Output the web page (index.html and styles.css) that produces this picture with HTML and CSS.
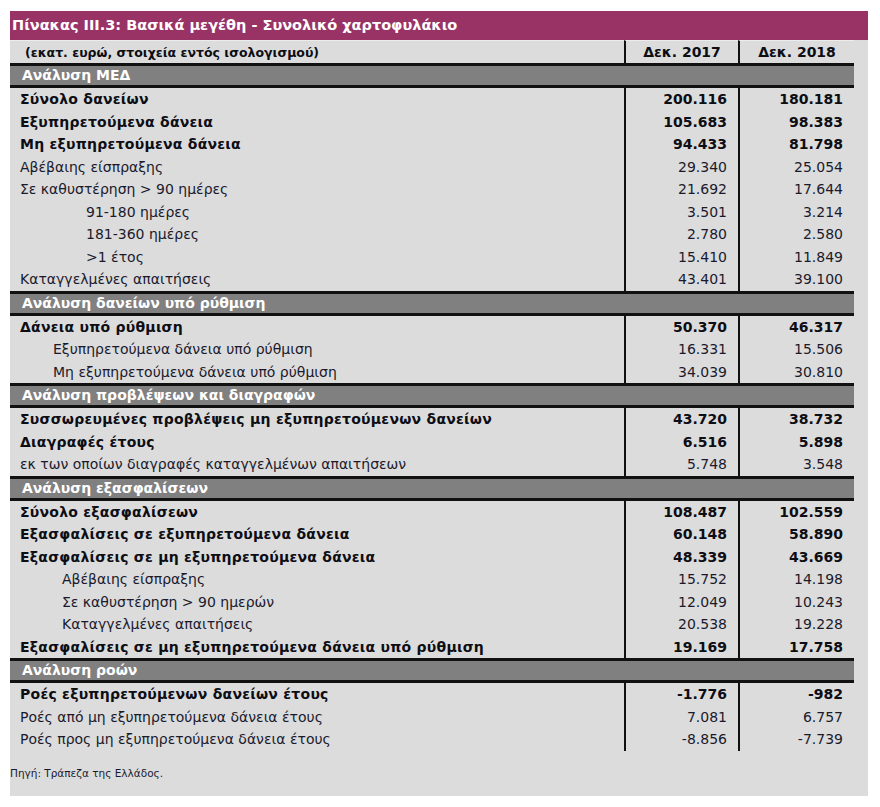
FILE: index.html
```html
<!DOCTYPE html>
<html lang="el">
<head>
<meta charset="utf-8">
<title>Πίνακας ΙΙΙ.3</title>
<link rel="stylesheet" href="styles.css">
</head>
<body>
<div class="panel">
  <div class="title">Πίνακας ΙΙΙ.3: Βασικά μεγέθη - Συνολικό χαρτοφυλάκιο</div>
  <div class="table">
    <div class="row head">
      <div class="lbl">(εκατ. ευρώ, στοιχεία εντός ισολογισμού)</div>
      <div class="num">Δεκ. 2017</div>
      <div class="num">Δεκ. 2018</div>
    </div>

    <div class="section">Ανάλυση ΜΕΔ</div>
    <div class="row b"><div class="lbl">Σύνολο δανείων</div><div class="num">200.116</div><div class="num">180.181</div></div>
    <div class="row b"><div class="lbl">Εξυπηρετούμενα δάνεια</div><div class="num">105.683</div><div class="num">98.383</div></div>
    <div class="row b"><div class="lbl">Μη εξυπηρετούμενα δάνεια</div><div class="num">94.433</div><div class="num">81.798</div></div>
    <div class="row"><div class="lbl">Αβέβαιης είσπραξης</div><div class="num">29.340</div><div class="num">25.054</div></div>
    <div class="row"><div class="lbl">Σε καθυστέρηση &gt; 90 ημέρες</div><div class="num">21.692</div><div class="num">17.644</div></div>
    <div class="row"><div class="lbl i2">91-180 ημέρες</div><div class="num">3.501</div><div class="num">3.214</div></div>
    <div class="row"><div class="lbl i2">181-360 ημέρες</div><div class="num">2.780</div><div class="num">2.580</div></div>
    <div class="row"><div class="lbl i2">&gt;1 έτος</div><div class="num">15.410</div><div class="num">11.849</div></div>
    <div class="row"><div class="lbl">Καταγγελμένες απαιτήσεις</div><div class="num">43.401</div><div class="num">39.100</div></div>

    <div class="section">Ανάλυση δανείων υπό ρύθμιση</div>
    <div class="row b"><div class="lbl">Δάνεια υπό ρύθμιση</div><div class="num">50.370</div><div class="num">46.317</div></div>
    <div class="row"><div class="lbl i1">Εξυπηρετούμενα δάνεια υπό ρύθμιση</div><div class="num">16.331</div><div class="num">15.506</div></div>
    <div class="row"><div class="lbl i1">Μη εξυπηρετούμενα δάνεια υπό ρύθμιση</div><div class="num">34.039</div><div class="num">30.810</div></div>

    <div class="section">Ανάλυση προβλέψεων και διαγραφών</div>
    <div class="row b"><div class="lbl">Συσσωρευμένες προβλέψεις μη εξυπηρετούμενων δανείων</div><div class="num">43.720</div><div class="num">38.732</div></div>
    <div class="row b"><div class="lbl">Διαγραφές έτους</div><div class="num">6.516</div><div class="num">5.898</div></div>
    <div class="row"><div class="lbl">εκ των οποίων διαγραφές καταγγελμένων απαιτήσεων</div><div class="num">5.748</div><div class="num">3.548</div></div>

    <div class="section">Ανάλυση εξασφαλίσεων</div>
    <div class="row b"><div class="lbl">Σύνολο εξασφαλίσεων</div><div class="num">108.487</div><div class="num">102.559</div></div>
    <div class="row b"><div class="lbl">Εξασφαλίσεις σε εξυπηρετούμενα δάνεια</div><div class="num">60.148</div><div class="num">58.890</div></div>
    <div class="row b"><div class="lbl">Εξασφαλίσεις σε μη εξυπηρετούμενα δάνεια</div><div class="num">48.339</div><div class="num">43.669</div></div>
    <div class="row"><div class="lbl i3">Αβέβαιης είσπραξης</div><div class="num">15.752</div><div class="num">14.198</div></div>
    <div class="row"><div class="lbl i3">Σε καθυστέρηση &gt; 90 ημερών</div><div class="num">12.049</div><div class="num">10.243</div></div>
    <div class="row"><div class="lbl i3">Καταγγελμένες απαιτήσεις</div><div class="num">20.538</div><div class="num">19.228</div></div>
    <div class="row b"><div class="lbl">Εξασφαλίσεις σε μη εξυπηρετούμενα δάνεια υπό ρύθμιση</div><div class="num">19.169</div><div class="num">17.758</div></div>

    <div class="section">Ανάλυση ροών</div>
    <div class="row b"><div class="lbl">Ροές εξυπηρετούμενων δανείων έτους</div><div class="num">-1.776</div><div class="num">-982</div></div>
    <div class="row"><div class="lbl">Ροές από μη εξυπηρετούμενα δάνεια έτους</div><div class="num">7.081</div><div class="num">6.757</div></div>
    <div class="row"><div class="lbl">Ροές προς μη εξυπηρετούμενα δάνεια έτους</div><div class="num">-8.856</div><div class="num">-7.739</div></div>
  </div>
  <div class="source">Πηγή: Τράπεζα της Ελλάδος.</div>
</div>
</body>
</html>
```

FILE: styles.css
```css
html, body {
  margin: 0;
  padding: 0;
  background: #ffffff;
}

body {
  font-family: "DejaVu Sans", Verdana, sans-serif;
  color: #1a1a2c;
}

.panel {
  width: 858px;
  margin: 11px 0 0 10px;
  background: #dcdcdc;
}

.title {
  height: 29px;
  line-height: 29px;
  background: #993366;
  color: #ffffff;
  font-weight: bold;
  font-size: 14.5px;
  padding-left: 2px;
  white-space: nowrap;
}

.table {
  width: 844px;
}

.row {
  display: grid;
  grid-template-columns: 614px 114px 116px;
  height: 22.5px;
  align-items: stretch;
}

.row > div {
  display: flex;
  align-items: center;
  white-space: nowrap;
  font-size: 14px;
}

.row .lbl {
  padding-left: 10px;
}

.row .lbl.i1 { padding-left: 43px; }
.row .lbl.i2 { padding-left: 76px; }
.row .lbl.i3 { padding-left: 52px; }

.row .num {
  border-left: 2px solid #111111;
  justify-content: flex-end;
  padding-right: 11px;
}

.row.b > div {
  font-weight: bold;
  color: #0d0d14;
}

.row.b .lbl {
  letter-spacing: 0.25px;
}

.row.head {
  height: 23px;
}

.row.head > div {
  font-weight: bold;
  color: #0d0d14;
  border-top: 1px solid #ececec;
}

.row.head .lbl {
  font-size: 12.5px;
  padding-left: 15px;
}

.row.head .num {
  justify-content: center;
  padding-right: 0;
  font-size: 14px;
}

.section {
  height: 19px;
  line-height: 19px;
  border-top: 3px solid #111111;
  border-bottom: 3px solid #111111;
  background: #808080;
  color: #ffffff;
  font-weight: bold;
  font-size: 14px;
  padding-left: 12px;
}

.source {
  height: 45px;
  font-size: 10.5px;
  padding-top: 16px;
  box-sizing: border-box;
  color: #1a1a2c;
}
```
